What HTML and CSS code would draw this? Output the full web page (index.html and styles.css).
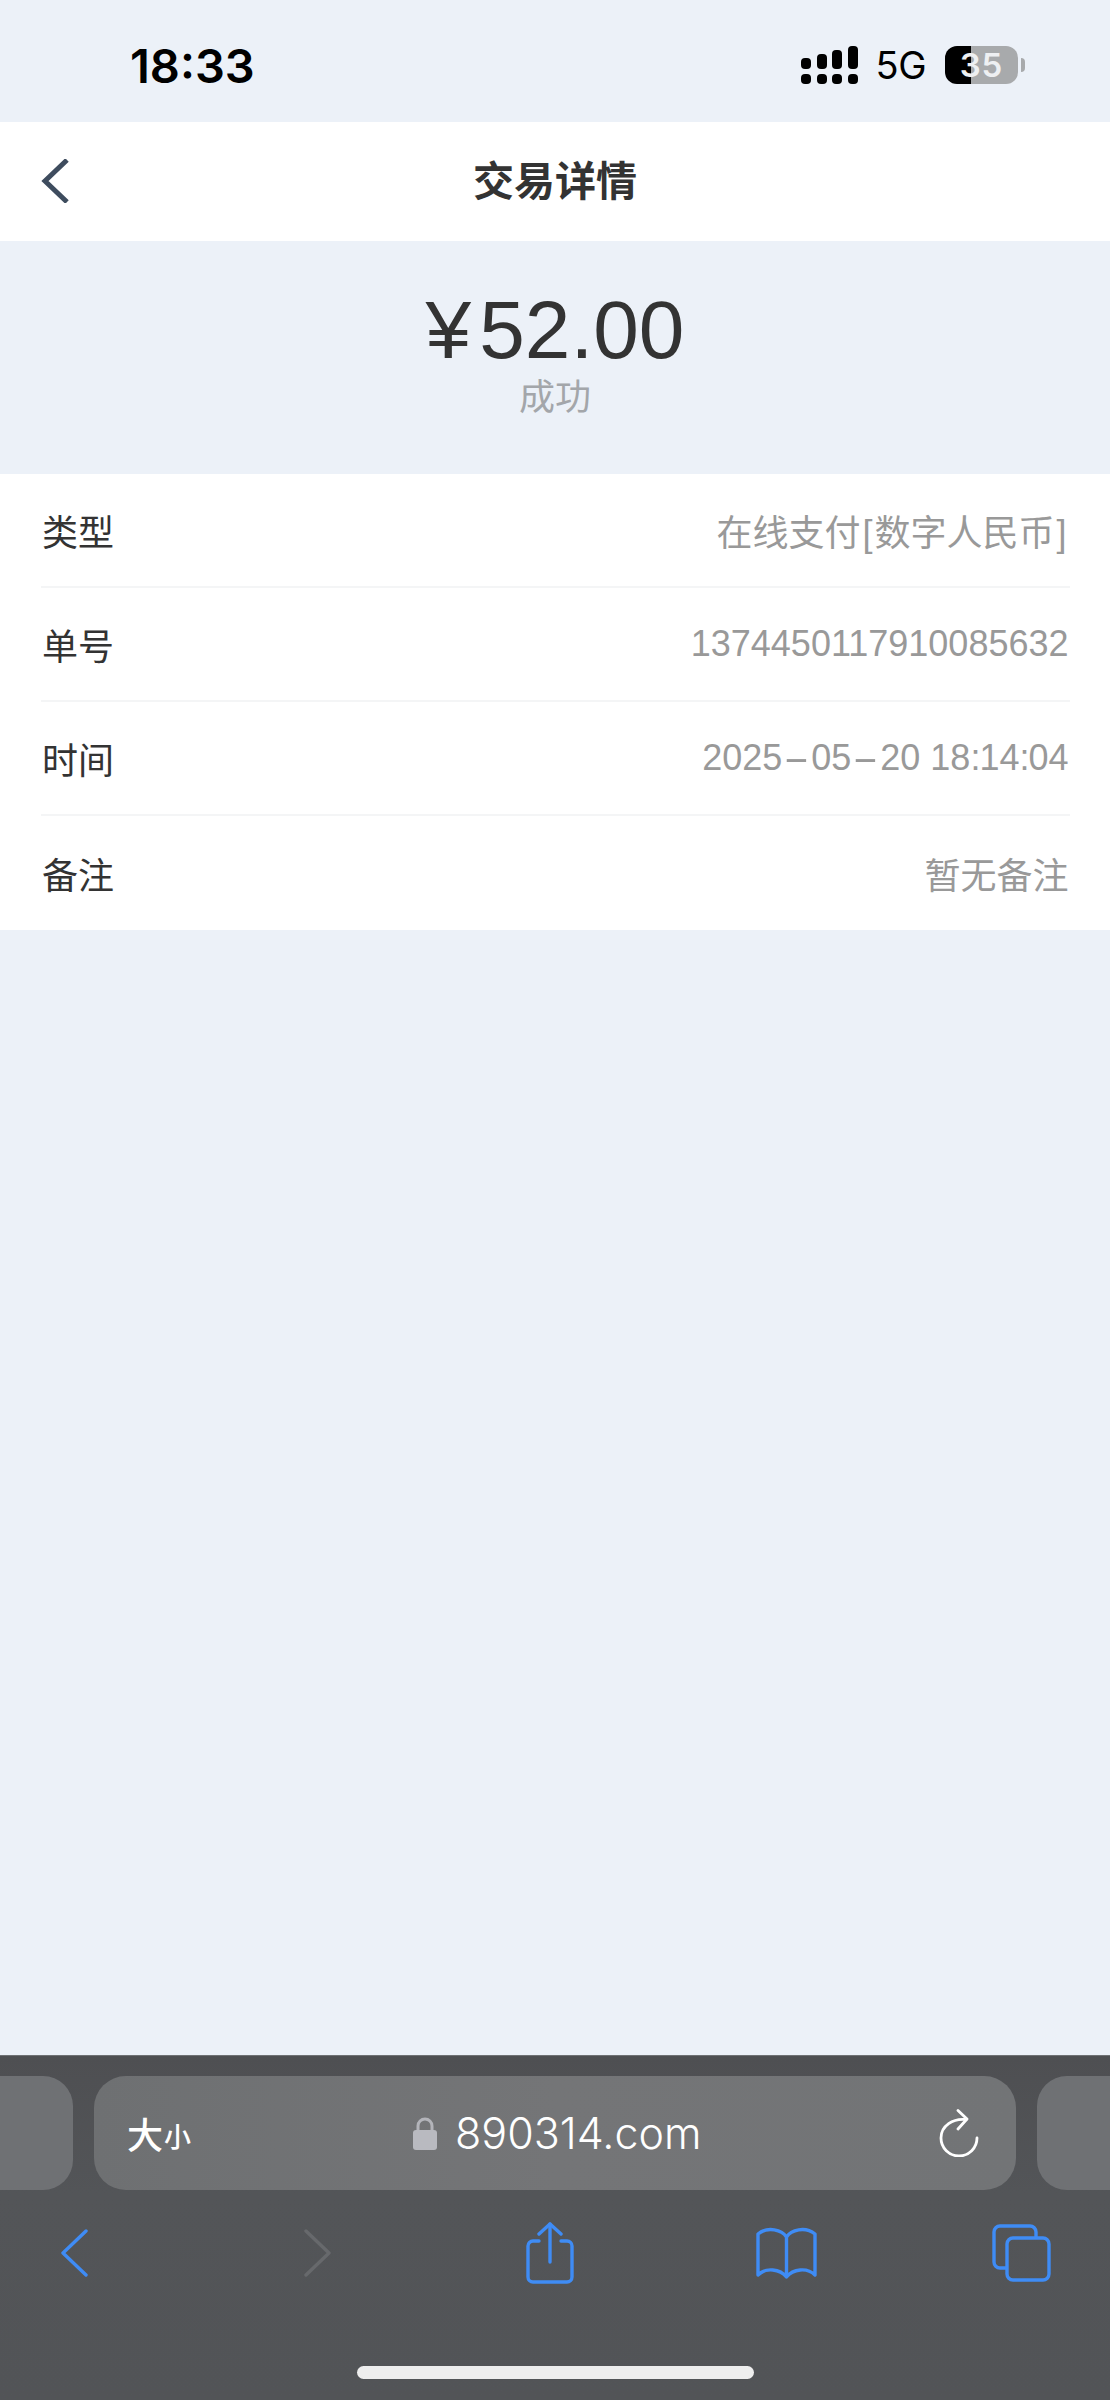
FILE: index.html
```html
<!DOCTYPE html>
<html lang="zh">
<head>
<meta charset="utf-8">
<title>交易详情</title>
<link rel="stylesheet" href="styles.css">
</head>
<body>
<div class="app">
  <div class="status">
    <span class="time">18:33</span>
    <div class="status-right">
      <svg class="signal" width="57" height="38" viewBox="0 0 57 38" fill="#000">
        <rect x="0" y="12" width="10" height="11" rx="4"/><rect x="16" y="8" width="10" height="15" rx="4"/><rect x="31" y="4" width="10" height="19" rx="4"/><rect x="47" y="0" width="10" height="23" rx="4"/>
        <rect x="0" y="28" width="10" height="10" rx="4"/><rect x="16" y="28" width="10" height="10" rx="4"/><rect x="31" y="28" width="10" height="10" rx="4"/><rect x="47" y="28" width="10" height="10" rx="4"/>
      </svg>
      <span class="net">5G</span>
      <div class="battery"><span>35</span></div>
      <div class="nub"></div>
    </div>
  </div>
  <header class="nav">
    <svg class="nav-back" width="30" height="44" viewBox="0 0 30 44" fill="none"><path d="M27 1 L5 22 L27 43" stroke="#3e4c5e" stroke-width="5"/></svg>
    <h1 class="nav-title">交易详情</h1>
  </header>
  <section class="hero">
    <div class="amount"><span class="yen">¥</span>52.00</div>
    <div class="state">成功</div>
  </section>
  <section class="list">
    <div class="row"><span class="key">类型</span><span class="val">在线支付<span class="br">[</span>数字人民币<span class="br">]</span></span></div>
    <div class="row"><span class="key">单号</span><span class="val">1374450117910085632</span></div>
    <div class="row"><span class="key">时间</span><span class="val">2025<span class="dash">-</span>05<span class="dash">-</span>20 18<span class="colon">:</span>14<span class="colon">:</span>04</span></div>
    <div class="row"><span class="key">备注</span><span class="val">暂无备注</span></div>
  </section>
  <div class="fill"></div>
  <footer class="bar">
    <div class="tabs">
      <div class="stub stub-left"></div>
      <div class="pill">
        <div class="pill-left"><span class="big">大</span><span class="small">小</span></div>
        <div class="pill-mid">
          <svg class="lock" width="24" height="33" viewBox="0 0 24 33"><path d="M5 14 V9 a7 7 0 0 1 14 0 V14" fill="none" stroke="#b3b4ba" stroke-width="3"/><rect x="0" y="13" width="24" height="20" rx="3" fill="#b9bac0"/></svg>
          <span class="url">890314.com</span>
        </div>
        <div class="pill-right">
          <svg width="40" height="48" viewBox="0 0 40 48" fill="none" stroke="#fff" stroke-width="2.8" stroke-linecap="round" stroke-linejoin="round"><path d="M27 10.5 C14 9 2 17 2 29 A18 18 0 1 0 38 29"/><path d="M19 1.5 L28 10 L19 20"/></svg>
        </div>
      </div>
      <div class="stub stub-right"></div>
    </div>
    <div class="tools">
      <svg class="t-back" width="27" height="48" viewBox="0 0 27 48" fill="none" stroke="#3f8cf5" stroke-width="3.4" stroke-linecap="round" stroke-linejoin="round"><path d="M25 2 L2 24 L25 46"/></svg>
      <svg class="t-fwd" width="27" height="48" viewBox="0 0 27 48" fill="none" stroke="#67696c" stroke-width="3.4" stroke-linecap="round" stroke-linejoin="round"><path d="M2 2 L25 24 L2 46"/></svg>
      <svg class="t-share" width="48" height="62" viewBox="0 0 48 62" fill="none" stroke="#3f8cf5" stroke-width="3.4" stroke-linecap="round" stroke-linejoin="round"><path d="M13 19 H7 a5 5 0 0 0 -5 5 V55 a5 5 0 0 0 5 5 H41 a5 5 0 0 0 5 -5 V24 a5 5 0 0 0 -5 -5 H35"/><path d="M24 40 V2"/><path d="M13 12 L24 2 L35 12"/></svg>
      <svg class="t-book" width="61" height="52" viewBox="0 0 61 52" fill="none" stroke="#3f8cf5" stroke-width="3.4" stroke-linecap="round" stroke-linejoin="round"><path d="M30.5 10 C26 3 12 -1 2 7 V48 C10 40 24 42 30.5 50 C37 42 51 40 59 48 V7 C49 -1 35 3 30.5 10 V50"/></svg>
      <svg class="t-tabs" width="59" height="58" viewBox="0 0 59 58" fill="none" stroke="#3f8cf5" stroke-width="3.4" stroke-linejoin="round"><path d="M44 13 V8 a6 6 0 0 0 -6 -6 H8 a6 6 0 0 0 -6 6 V38 a6 6 0 0 0 6 6 H14"/><rect x="15" y="14" width="42" height="42" rx="6"/></svg>
    </div>
    <div class="home"></div>
  </footer>
</div>
</body>
</html>
```
FILE: styles.css
```css
* { box-sizing: border-box; }
html, body { margin: 0; padding: 0; }
body { font-family: "Liberation Sans", "Noto Sans CJK SC", sans-serif; background: #ecf1f8; }
.app { width: 1110px; height: 2400px; display: flex; flex-direction: column; overflow: hidden; }

.status { height: 122px; flex: none; display: flex; align-items: center; justify-content: space-between; padding: 8px 85px 0 130px; color: #000; }
.time { font-family: Inter, "Liberation Sans", sans-serif; font-size: 47px; font-weight: 600; line-height: 1; }
.status-right { display: flex; align-items: center; }
.signal { display: block; }
.net { margin-left: 18px; font-family: Inter, "Liberation Sans", sans-serif; font-size: 38px; line-height: 1; font-weight: 400; letter-spacing: -0.5px; }
.battery { margin-left: 19px; width: 73px; height: 38px; border-radius: 12px; background: linear-gradient(to right, #000 0 26px, #a8aaac 26px); display: flex; align-items: center; justify-content: center; }
.battery span { font-family: Inter, "Liberation Sans", sans-serif; font-size: 33px; font-weight: 600; line-height: 1; color: #eef0f2; letter-spacing: 1px; }
.nub { margin-left: 3px; width: 4px; height: 14px; border-radius: 0 4px 4px 0; background: #a8aaac; }

.nav { height: 119px; flex: none; background: #fff; display: flex; align-items: center; justify-content: center; position: relative; padding-bottom: 6px; }
.nav-back { position: absolute; left: 40px; top: 37px; }
.nav-title { margin: 0; font-size: 41px; font-weight: 700; line-height: 1; color: #333; font-family: "Noto Sans CJK SC", sans-serif; }

.hero { height: 233px; flex: none; padding-top: 43px; text-align: center; }
.amount { font-size: 82px; line-height: 92px; color: #333; }
.yen { margin-right: 8px; }
.state { font-size: 36px; line-height: 44px; color: #a3a6aa; }

.list { height: 456px; flex: none; background: #fff; padding: 0 40px 0 41px; }
.row { height: 114px; display: flex; align-items: center; justify-content: space-between; border-bottom: 2px solid #f4f5f6; font-size: 36px; }
.row:last-child { border-bottom: 0; }
.key { color: #333; margin-left: 1px; }
.val { color: #999; margin-right: 1.5px; }
.br { margin: 0 2px; }
.dash { display: inline-block; width: 29px; text-align: center; transform: scaleX(2.2); }
.colon { letter-spacing: -1px; }

.fill { flex: 1; }

.bar { height: 345px; flex: none; background: linear-gradient(to bottom, #4e4f52, #535558 40%, #525457); border-top: 1px solid #6f7174; position: relative; padding-top: 20px; }
.tabs { display: flex; align-items: stretch; height: 114px; }
.stub { flex: none; width: 73px; background: #6f7174; }
.stub-left { margin-left: 0; border-radius: 0 30px 30px 0; }
.stub-right { width: 73px; margin-left: 21px; border-radius: 30px 0 0 30px; }
.pill { flex: none; width: 922px; margin-left: 21px; border-radius: 32px; background: linear-gradient(to right, #6e7072, #747577 50%, #727476); display: flex; align-items: center; color: #fff; padding: 0 37px 0 33px; }
.pill-left { width: 286px; display: flex; align-items: flex-end; }
.big { font-size: 36px; line-height: 40px; font-weight: 500; font-family: "Noto Sans CJK SC", sans-serif; }
.small { font-size: 27px; line-height: 34px; margin-left: 1px; font-weight: 500; font-family: "Noto Sans CJK SC", sans-serif; }
.pill-mid { display: flex; align-items: center; }
.lock { display: block; margin-right: 18px; }
.url { font-family: Inter, "Liberation Sans", sans-serif; font-size: 43px; line-height: 1; color: #fff; font-weight: 300; }
.pill-right { margin-left: auto; display: flex; }
.pill-right svg { display: block; }

.tools { display: flex; align-items: center; height: 62px; margin-top: 32px; padding-left: 61px; }
.tools svg { flex: none; display: block; }
.t-fwd { margin-left: 216px; }
.t-share { margin-left: 195px; }
.t-book { margin-left: 182px; }
.t-tabs { margin-left: 175px; }
.home { position: absolute; left: 357px; top: 310px; width: 397px; height: 13px; border-radius: 7px; background: #eeeeee; }
```
